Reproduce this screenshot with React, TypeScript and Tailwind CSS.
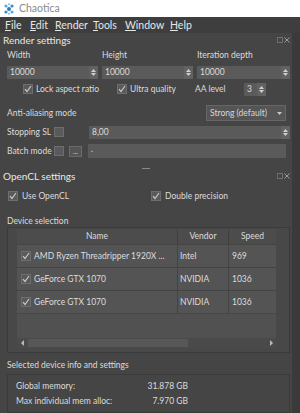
import React from 'react';

const font = { fontFamily: 'Lato, "Open Sans", sans-serif' };

const Check: React.FC<{ checked?: boolean }> = ({ checked }) => (
  <span className="inline-flex items-center justify-center w-[10px] h-[10px] bg-[#5a5a5a] border border-[#6e6e6e] shrink-0">
    {checked && (
      <svg width="8" height="8" viewBox="0 0 8 8">
        <path d="M1 4.2 L3 6.5 L7 1" fill="none" stroke="#c8c8c8" strokeWidth="1.2" />
      </svg>
    )}
  </span>
);

const SpinArrows: React.FC = () => (
  <span className="flex flex-col items-center justify-center w-[9px] h-full bg-[#626262] gap-[1px]">
    <svg width="5" height="3" viewBox="0 0 5 3"><path d="M0 3 L2.5 0 L5 3Z" fill="#d0d0d0" /></svg>
    <svg width="5" height="3" viewBox="0 0 5 3"><path d="M0 0 L2.5 3 L5 0Z" fill="#d0d0d0" /></svg>
  </span>
);

const SpinBox: React.FC<{ value: string; className?: string }> = ({ value, className }) => (
  <div className={`flex items-center h-[13px] bg-[#5a5a5a] ${className ?? ''}`}>
    <span className="flex-1 pl-[3px] text-[8.5px] text-[#dcdcdc] leading-none">{value}</span>
    <SpinArrows />
  </div>
);

const DockHeader: React.FC<{ title: string }> = ({ title }) => (
  <div className="flex items-center justify-between h-[14px] pl-[3px] pr-[2px]">
    <span className="text-[10px] text-[#e8e8e8] leading-none">{title}</span>
    <span className="flex gap-[1px]">
      <svg width="6" height="6" viewBox="0 0 6 6"><rect x="0.5" y="0.5" width="5" height="5" fill="none" stroke="#9a9a9a" strokeDasharray="1 1" /></svg>
      <svg width="6" height="6" viewBox="0 0 6 6"><path d="M0.5 0.5 L5.5 5.5 M5.5 0.5 L0.5 5.5" stroke="#9a9a9a" /></svg>
    </span>
  </div>
);

const Logo: React.FC = () => (
  <svg width="12" height="12" viewBox="0 0 12 12">
    <circle cx="6" cy="6" r="2" fill="#2a7fb8" />
    <circle cx="3" cy="3" r="1.6" fill="#5aa8d8" />
    <circle cx="9" cy="3" r="1.6" fill="#3a8cc4" />
    <circle cx="3" cy="9" r="1.6" fill="#3a8cc4" />
    <circle cx="9" cy="9" r="1.6" fill="#5aa8d8" />
    <circle cx="6" cy="1.2" r="1" fill="#7fc0e8" />
    <circle cx="6" cy="10.8" r="1" fill="#7fc0e8" />
  </svg>
);

const Menu: React.FC<{ first: string; rest: string; w: string }> = ({ first, rest, w }) => (
  <span className={w}>
    <span className="underline underline-offset-1">{first}</span>
    {rest}
  </span>
);

const rows = [
  { name: 'AMD Ryzen Threadripper 1920X ...', vendor: 'Intel', speed: '969' },
  { name: 'GeForce GTX 1070', vendor: 'NVIDIA', speed: '1036' },
  { name: 'GeForce GTX 1070', vendor: 'NVIDIA', speed: '1036' },
];

export default function App() {
  return (
    <div className="w-[300px] h-[413px] overflow-hidden bg-[#454545] text-[#dcdcdc] select-none" style={font}>
      {/* Title bar */}
      <div className="flex items-center h-[17px] bg-white pl-[3px] gap-[4px]">
        <Logo />
        <span className="text-[10.5px] text-[#8a8a8a] leading-none">Chaotica</span>
      </div>

      {/* Menu bar */}
      <div className="flex items-center h-[16px] bg-[#3e3e3e] pl-[5px] text-[10.5px] text-[#e6e6e6] leading-none">
        <Menu first="F" rest="ile" w="w-[25px]" />
        <Menu first="E" rest="dit" w="w-[25px]" />
        <Menu first="R" rest="ender" w="w-[38px]" />
        <Menu first="T" rest="ools" w="w-[32px]" />
        <Menu first="W" rest="indow" w="w-[45px]" />
        <Menu first="H" rest="elp" w="w-[25px]" />
      </div>

      <div className="flex h-[380px]">
        <div className="w-[292px] flex flex-col">
          <DockHeader title="Render settings" />

          {/* Width / Height / Iteration depth */}
          <div className="grid grid-cols-[91px_91px_93px] gap-x-[4px] px-[7px] mt-[4px] text-[8.5px] leading-none text-[#dcdcdc]">
            <span className="h-[10px]">Width</span>
            <span className="h-[10px]">Height</span>
            <span className="h-[10px]">Iteration depth</span>
          </div>
          <div className="grid grid-cols-[91px_91px_93px] gap-x-[4px] px-[7px] mt-[5px]">
            <SpinBox value="10000" />
            <SpinBox value="10000" />
            <SpinBox value="10000" />
          </div>

          {/* Lock / Ultra / AA level */}
          <div className="flex items-center h-[14px] mt-[3px] text-[8.5px] leading-none">
            <span className="ml-[23px]"><Check checked /></span>
            <span className="ml-[3px] w-[81px]">Lock aspect ratio</span>
            <span><Check checked /></span>
            <span className="ml-[3px] w-[65px]">Ultra quality</span>
            <span className="w-[49px]">AA level</span>
            <SpinBox value="3" className="w-[22px]" />
          </div>

          {/* Anti-aliasing mode */}
          <div className="flex items-center h-[16px] mt-[9px] text-[8.5px] leading-none pl-[7px] pr-[6px]">
            <span className="flex-1">Anti-aliasing mode</span>
            <div className="flex items-center w-[80px] h-[16px] bg-[#555555] border border-[#666666] px-[3px]">
              <span className="flex-1 text-[#d8d8d8]">Strong (default)</span>
              <svg width="5" height="3" viewBox="0 0 5 3"><path d="M0 0 L2.5 3 L5 0Z" fill="#c8c8c8" /></svg>
            </div>
          </div>

          {/* Stopping SL */}
          <div className="flex items-center h-[14px] mt-[4px] text-[8.5px] leading-none pl-[7px] pr-[2px]">
            <span className="w-[47px]">Stopping SL</span>
            <Check />
            <SpinBox value="8,00" className="flex-1 ml-[25px]" />
          </div>

          {/* Batch mode */}
          <div className="flex items-center h-[14px] mt-[5px] text-[8.5px] leading-none pl-[7px] pr-[6px]">
            <span className="w-[47px]">Batch mode</span>
            <Check />
            <span className="flex items-center justify-center w-[13px] h-[11px] ml-[5px] bg-[#555555] border border-[#6a6a6a] text-[7px]">...</span>
            <span className="flex-1 h-[14px] ml-[6px] bg-[#5a5a5a] pl-[3px] leading-[11px]">.</span>
          </div>

          {/* Splitter */}
          <div className="flex justify-center mt-[10px] h-[1px]">
            <span className="w-[8px] h-[1px] bg-[#8a8a8a]" />
          </div>

          <DockHeader title="OpenCL settings" />

          {/* Use OpenCL / Double precision */}
          <div className="flex items-center h-[12px] mt-[7px] text-[8.5px] leading-none">
            <span className="ml-[8px]"><Check checked /></span>
            <span className="ml-[4px] w-[129px]">Use OpenCL</span>
            <span><Check checked /></span>
            <span className="ml-[4px]">Double precision</span>
          </div>

          <div className="text-[8.5px] leading-none pl-[7px] mt-[15px] h-[10px]">Device selection</div>

          {/* Device table */}
          <div className="mx-[7px] mr-[2px] h-[126px] border border-[#3a3a3a] bg-[#484848] pl-[9px] pr-[13px] pt-[1px]">
            <div className="flex flex-col h-[119px] bg-[#515151]">
              <div className="grid grid-cols-[161px_51px_1fr] h-[15px] bg-[#4c4c4c] text-[8.5px] leading-none items-center text-[#dcdcdc]">
                <span className="text-center border-r border-[#3e3e3e] h-full flex items-center justify-center">Name</span>
                <span className="text-center border-r border-[#3e3e3e] h-full flex items-center justify-center">Vendor</span>
                <span className="text-center">Speed</span>
              </div>
              {rows.map((r, i) => (
                <div key={i} className="grid grid-cols-[161px_51px_1fr] h-[23px] border-t border-[#444444] text-[8.5px] leading-none items-center bg-[#545454]">
                  <span className="flex items-center gap-[3px] pl-[4px] h-full border-r border-[#444444] whitespace-nowrap overflow-hidden">
                    <Check checked />
                    {r.name}
                  </span>
                  <span className="pl-[2px] h-full flex items-center border-r border-[#444444]">{r.vendor}</span>
                  <span className="pl-[3px]">{r.speed}</span>
                </div>
              ))}
              <div className="flex-1 border-t border-[#484848]" />
              <div className="flex items-center h-[10px] bg-[#4a4a4a]">
                <svg width="8" height="8" viewBox="0 0 8 8" className="ml-[2px]"><path d="M5 1 L2 4 L5 7Z" fill="#bbbbbb" /></svg>
                <span className="w-[160px] h-[8px] bg-[#575757] ml-[1px]" />
                <span className="flex-1" />
                <svg width="8" height="8" viewBox="0 0 8 8" className="mr-[1px]"><path d="M3 1 L6 4 L3 7Z" fill="#bbbbbb" /></svg>
              </div>
            </div>
          </div>

          <div className="text-[8.5px] leading-none pl-[7px] mt-[8px] h-[10px]">Selected device info and settings</div>

          {/* Info box */}
          <div className="mx-[7px] mr-[2px] mt-[3px] flex-1 border border-[#3a3a3a] pl-[8px] pt-[7px] text-[8.5px] leading-none">
            <div className="grid grid-cols-[125px_47px] gap-y-[6px]">
              <span>Global memory:</span>
              <span className="text-right">31.878 GB</span>
              <span>Max individual mem alloc:</span>
              <span className="text-right">7.970 GB</span>
            </div>
          </div>
        </div>
        <div className="w-[8px] bg-[#3a3a3a]" />
      </div>
    </div>
  );
}
